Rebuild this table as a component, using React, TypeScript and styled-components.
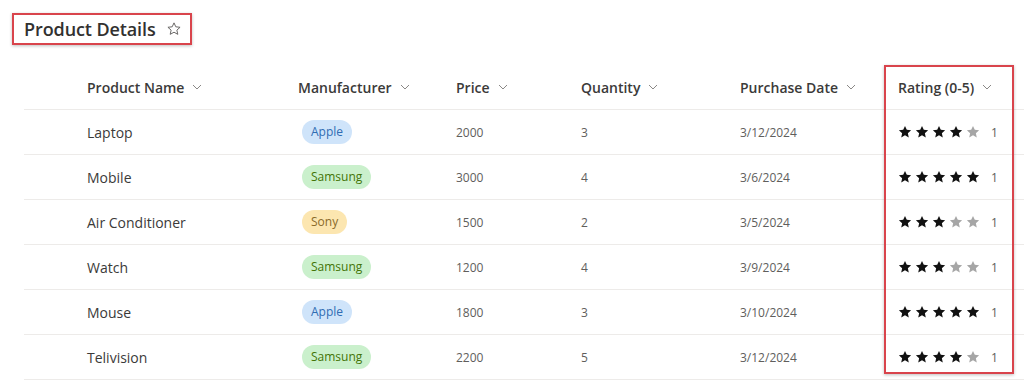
import styled, { createGlobalStyle } from "styled-components";

const GlobalStyle = createGlobalStyle`
  body {
    margin: 0;
    background: #ffffff;
    font-family: "Open Sans", "Noto Sans", sans-serif;
    color: #323130;
  }
`;

const Page = styled.div`
  width: 1024px;
  height: 385px;
  overflow: hidden;
  padding-top: 13px;
  box-sizing: border-box;
`;

const TitleBox = styled.div`
  display: inline-flex;
  align-items: center;
  gap: 10px;
  margin-left: 12px;
  height: 32px;
  padding: 0 8px 0 10px;
  border: 2px solid #d9444c;
  box-sizing: border-box;
  box-shadow: 0 1px 3px rgba(0, 0, 0, 0.25);
`;

const Title = styled.h1`
  margin: 0;
  font-size: 18px;
  font-weight: 600;
  color: #323130;
  letter-spacing: -0.1px;
`;

const TableWrap = styled.div`
  position: relative;
  margin-top: 20px;
  margin-left: 24px;
`;

const Grid = "63px 211px 158px 125px 159px 158px 1fr";

const HeaderRow = styled.div`
  display: grid;
  grid-template-columns: ${Grid};
  height: 44px;
  align-items: center;
  border-bottom: 1px solid #edebe9;
`;

const Row = styled.div`
  display: grid;
  grid-template-columns: ${Grid};
  height: 44px;
  align-items: center;
  border-bottom: 1px solid #edebe9;
`;

const HeadCell = styled.div`
  display: flex;
  align-items: center;
  gap: 8px;
  font-size: 14px;
  font-weight: 600;
  color: #3b3a39;
`;

const Cell = styled.div<{ $main?: boolean }>`
  font-size: ${(p) => (p.$main ? "14px" : "12px")};
  color: ${(p) => (p.$main ? "#3b3a39" : "#605e5c")};
`;

const Pill = styled.span<{ $bg: string; $fg: string }>`
  display: inline-block;
  margin-left: 4px;
  height: 24px;
  line-height: 24px;
  padding: 0 9px;
  border-radius: 12px;
  font-size: 12px;
  background: ${(p) => p.$bg};
  color: ${(p) => p.$fg};
`;

const Stars = styled.div`
  display: flex;
  align-items: center;
  gap: 3px;
  font-size: 12px;
  color: #605e5c;
`;

const Count = styled.span`
  margin-left: 8px;
`;

const Highlight = styled.div`
  position: absolute;
  left: 860px;
  top: 0;
  width: 130px;
  height: 309px;
  border: 2px solid #d9444c;
  box-sizing: border-box;
  box-shadow: 0 1px 3px rgba(0, 0, 0, 0.25);
  pointer-events: none;
`;

const Chevron = () => (
  <svg width="10" height="6" viewBox="0 0 10 6" fill="none">
    <path d="M1 1l4 4 4-4" stroke="#8a8886" strokeWidth="1" />
  </svg>
);

const StarOutline = () => (
  <svg width="16" height="16" viewBox="0 0 24 24" fill="none">
    <path
      d="M12 2.8l2.7 5.9 6.4.7-4.8 4.3 1.4 6.3L12 16.8 6.3 20l1.4-6.3L2.9 9.4l6.4-.7z"
      stroke="#605e5c"
      strokeWidth="1.4"
      strokeLinejoin="round"
    />
  </svg>
);

const Star = ({ on }: { on: boolean }) => (
  <svg width="14" height="14" viewBox="0 0 24 24">
    <path
      d="M12 1.5l3.1 6.8 7.4.8-5.6 5 1.6 7.4L12 17.7l-6.5 3.8 1.6-7.4-5.6-5 7.4-.8z"
      fill={on ? "#111111" : "#a6a6a6"}
    />
  </svg>
);

const brands: Record<string, [string, string]> = {
  Apple: ["#cfe4fa", "#2f6cb3"],
  Samsung: ["#caf0cc", "#437406"],
  Sony: ["#fce6b0", "#8a6a2a"],
};

const rows = [
  { name: "Laptop", maker: "Apple", price: "2000", qty: "3", date: "3/12/2024", rating: 4 },
  { name: "Mobile", maker: "Samsung", price: "3000", qty: "4", date: "3/6/2024", rating: 5 },
  { name: "Air Conditioner", maker: "Sony", price: "1500", qty: "2", date: "3/5/2024", rating: 3 },
  { name: "Watch", maker: "Samsung", price: "1200", qty: "4", date: "3/9/2024", rating: 3 },
  { name: "Mouse", maker: "Apple", price: "1800", qty: "3", date: "3/10/2024", rating: 5 },
  { name: "Telivision", maker: "Samsung", price: "2200", qty: "5", date: "3/12/2024", rating: 4 },
];

const headers = ["Product Name", "Manufacturer", "Price", "Quantity", "Purchase Date", "Rating (0-5)"];

export default function App() {
  return (
    <>
      <GlobalStyle />
      <Page>
        <TitleBox>
          <Title>Product Details</Title>
          <StarOutline />
        </TitleBox>
        <TableWrap>
          <HeaderRow>
            <div />
            {headers.map((h) => (
              <HeadCell key={h}>
                {h}
                <Chevron />
              </HeadCell>
            ))}
          </HeaderRow>
          {rows.map((r) => (
            <Row key={r.name}>
              <div />
              <Cell $main>{r.name}</Cell>
              <Cell>
                <Pill $bg={brands[r.maker][0]} $fg={brands[r.maker][1]}>
                  {r.maker}
                </Pill>
              </Cell>
              <Cell>{r.price}</Cell>
              <Cell>{r.qty}</Cell>
              <Cell>{r.date}</Cell>
              <Stars>
                {[1, 2, 3, 4, 5].map((i) => (
                  <Star key={i} on={i <= r.rating} />
                ))}
                <Count>1</Count>
              </Stars>
            </Row>
          ))}
          <Highlight />
        </TableWrap>
      </Page>
    </>
  );
}
